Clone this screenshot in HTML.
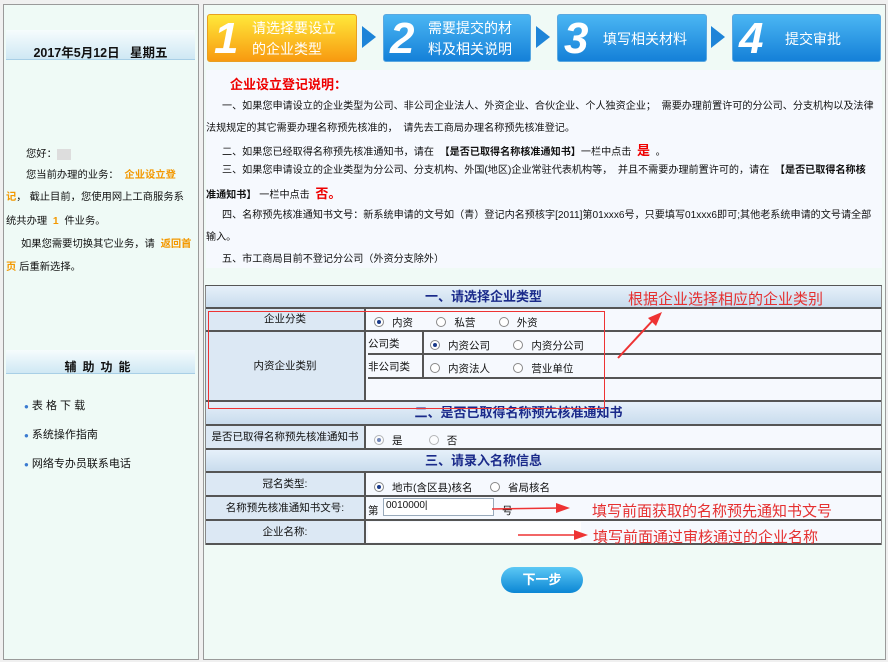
<!DOCTYPE html>
<html><head><meta charset="utf-8"><style>
*{margin:0;padding:0;box-sizing:border-box}
body{width:888px;height:662px;background:#f0f0f0;font-family:"Liberation Sans","Noto Sans CJK SC",sans-serif;font-size:11px;color:#111;position:relative;overflow:hidden}
.a{position:absolute}
.lp{left:3px;top:4px;width:196px;height:656px;background:#effaf6;border:1px solid #9a9a9a}
.rp{left:203px;top:4px;width:683px;height:656px;background:#f0faf6;border:1px solid #9a9a9a}
.bar{background:linear-gradient(#f6fcfd,#cfe8f4);border-bottom:1px solid #a8cfe6}
.step{top:14px;height:48px;border-radius:3px;background:linear-gradient(#4bb6f3,#1480d8);border:1px solid #5aa8e0;color:#fff;font-size:14px;font-weight:bold}
.step .n{position:absolute;left:6px;top:0;font-size:44px;font-style:italic;font-family:"Liberation Sans",sans-serif;font-weight:bold;line-height:48px;color:#fff}
.arr{top:26px;width:0;height:0;border-top:11px solid transparent;border-bottom:11px solid transparent;border-left:14px solid #1e84d8}
.txt{left:206px;top:70px;width:676px;height:198px;background:#f6f9fe;overflow:hidden}
.p{position:absolute;left:0;font-size:10.1px;white-space:nowrap}
.row{position:absolute;left:206px;width:675px;border-bottom:2px solid #555;background:#f6f9fe}
.hd{background:linear-gradient(#e6f0fa,#c9dced);color:#1a2a8a;font-weight:bold;font-size:13px;text-align:center}
.lb{position:absolute;left:0;top:0;width:160px;height:100%;background:#dce8f4;border-right:2px solid #555;text-align:center;font-size:10.5px}
.rd{display:inline-block;width:10px;height:10px;border-radius:50%;border:1px solid #888;background:#fff;vertical-align:-1px;margin-right:8px;position:relative}
.rd.on:after{content:"";position:absolute;left:2px;top:2px;width:4px;height:4px;border-radius:50%;background:#1a3a8a}
.red{color:#e53030;font-size:15px;font-family:"Liberation Sans","WenQuanYi Zen Hei",sans-serif}
.o{color:#f39800;font-weight:bold}
</style></head><body>
<div class="a lp"></div>
<div class="a rp"></div>
<div class="a bar" style="left:6px;top:30px;width:189px;height:30px"></div>
<div class="a" style="left:6px;top:42px;width:189px;text-align:center;font-weight:bold;font-size:12.5px">2017年5月12日&nbsp;&nbsp;&nbsp;星期五</div>
<div class="a" style="left:6px;top:143px;width:192px;font-size:10.3px;line-height:23px;white-space:nowrap">
<div style="padding-left:20px">您好：<span style="color:#fff;background:#ddd">&nbsp;&nbsp;&nbsp;&nbsp;&nbsp;</span></div>
<div style="padding-left:20px;line-height:20px">您当前办理的业务：&nbsp;&nbsp;<span class="o">企业设立登</span></div>
<div style="line-height:24px"><span class="o">记</span>，&nbsp;截止目前，您使用网上工商服务系</div>
<div>统共办理&nbsp;&nbsp;<span class="o">1</span>&nbsp;&nbsp;件业务。</div>
<div style="padding-left:15px">如果您需要切换其它业务，请&nbsp;&nbsp;<span class="o">返回首</span></div>
<div><span class="o">页</span>&nbsp;后重新选择。</div>
</div>
<div class="a bar" style="left:6px;top:350px;width:189px;height:24px"></div>
<div class="a" style="left:6px;top:358px;width:189px;text-align:center;font-weight:bold;font-size:12px;letter-spacing:6px">辅助功能</div>
<div class="a" style="left:24px;top:392px;font-size:11px;line-height:28px">
<div><span style="color:#3a7ad0;font-size:8px">●</span>&nbsp;表 格 下 载</div>
<div><span style="color:#3a7ad0;font-size:8px">●</span>&nbsp;系统操作指南</div>
<div><span style="color:#3a7ad0;font-size:8px">●</span>&nbsp;网络专办员联系电话</div>
</div>

<div class="a step" style="left:207px;width:150px;background:linear-gradient(#ffe83a,#f89a10);border-color:#e8a020"><span class="n">1</span><div class="a" style="left:44px;top:3px;line-height:21px;font-weight:normal">请选择要设立<br>的企业类型</div></div>
<div class="a arr" style="left:362px"></div>
<div class="a step" style="left:383px;width:148px"><span class="n">2</span><div class="a" style="left:44px;top:3px;line-height:21px;font-weight:normal">需要提交的材<br>料及相关说明</div></div>
<div class="a arr" style="left:536px"></div>
<div class="a step" style="left:557px;width:150px"><span class="n">3</span><div class="a" style="left:45px;top:14px;font-weight:normal">填写相关材料</div></div>
<div class="a arr" style="left:711px"></div>
<div class="a step" style="left:732px;width:149px"><span class="n">4</span><div class="a" style="left:52px;top:14px;font-weight:normal">提交审批</div></div>

<div class="a txt">
<div class="p" style="left:24px;top:4px;color:#e00;font-weight:bold;font-size:13px">企业设立登记说明：</div>
<div class="p" style="left:16px;top:27px">一、如果您申请设立的企业类型为公司、非公司企业法人、外资企业、合伙企业、个人独资企业；&nbsp; 需要办理前置许可的分公司、分支机构以及法律</div>
<div class="p" style="left:0;top:49px">法规规定的其它需要办理名称预先核准的，&nbsp; 请先去工商局办理名称预先核准登记。</div>
<div class="p" style="left:16px;top:70px">二、如果您已经取得名称预先核准通知书，请在&nbsp; <b>【是否已取得名称核准通知书】</b>一栏中点击&nbsp; <span style="color:#e00;font-size:13px;font-weight:bold">是</span>&nbsp;&nbsp;。</div>
<div class="p" style="left:16px;top:91px">三、如果您申请设立的企业类型为分公司、分支机构、外国(地区)企业常驻代表机构等，&nbsp; 并且不需要办理前置许可的，请在&nbsp; <b>【是否已取得名称核</b></div>
<div class="p" style="left:0;top:113px"><b>准通知书】</b>&nbsp;一栏中点击&nbsp; <span style="color:#e00;font-size:13px;font-weight:bold">否。</span></div>
<div class="p" style="left:16px;top:136px">四、名称预先核准通知书文号：新系统申请的文号如（青）登记内名预核字[2011]第01xxx6号，只要填写01xxx6即可;其他老系统申请的文号请全部</div>
<div class="p" style="left:0;top:158px">输入。</div>
<div class="p" style="left:16px;top:180px">五、市工商局目前不登记分公司（外资分支除外）</div>
</div>

<div class="a" style="left:205px;top:285px;width:677px;height:260px;border:1px solid #888;border-top:2px solid #555"></div>
<div class="row hd" style="top:286px;height:23px;line-height:21px"><span style="margin-left:-120px">一、请选择企业类型</span></div>
<div class="row" style="top:309px;height:23px"><div class="lb" style="line-height:21px">企业分类</div><div class="a" style="left:168px;top:6px;font-size:10.5px"><span class="rd on"></span>内资&nbsp;&nbsp;&nbsp;&nbsp;&nbsp;&nbsp;&nbsp;&nbsp;<span class="rd"></span>私营&nbsp;&nbsp;&nbsp;&nbsp;&nbsp;&nbsp;&nbsp;&nbsp;<span class="rd"></span>外资</div></div>
<div class="row" style="top:332px;height:70px;border-bottom:2px solid #555"><div class="lb" style="line-height:68px">内资企业类别</div>
<div class="a" style="left:162px;top:0;width:56px;height:23px;border-right:2px solid #555;border-bottom:2px solid #555;font-size:10.5px;padding-top:4px">公司类</div>
<div class="a" style="left:218px;top:0;right:0;height:23px;border-bottom:2px solid #555;font-size:10.5px;padding:6px 0 0 6px"><span class="rd on"></span>内资公司&nbsp;&nbsp;&nbsp;&nbsp;&nbsp;&nbsp;&nbsp;&nbsp;<span class="rd"></span>内资分公司</div>
<div class="a" style="left:162px;top:23px;width:56px;height:24px;border-right:2px solid #555;border-bottom:2px solid #555;font-size:10.5px;padding-top:4px">非公司类</div>
<div class="a" style="left:218px;top:23px;right:0;height:24px;border-bottom:2px solid #555;font-size:10.5px;padding:6px 0 0 6px"><span class="rd"></span>内资法人&nbsp;&nbsp;&nbsp;&nbsp;&nbsp;&nbsp;&nbsp;&nbsp;<span class="rd"></span>营业单位</div>
</div>
<div class="row hd" style="top:402px;height:24px;line-height:22px"><span style="margin-left:-50px">二、是否已取得名称预先核准通知书</span></div>
<div class="row" style="top:426px;height:24px"><div class="lb" style="line-height:22px">是否已取得名称预先核准通知书</div><div class="a" style="left:168px;top:7px;font-size:10.5px"><span class="rd on" style="opacity:.6"></span>是&nbsp;&nbsp;&nbsp;&nbsp;&nbsp;&nbsp;&nbsp;&nbsp;&nbsp;<span class="rd" style="opacity:.6"></span>否</div></div>
<div class="row hd" style="top:450px;height:23px;line-height:21px"><span style="margin-left:-120px">三、请录入名称信息</span></div>
<div class="row" style="top:473px;height:24px"><div class="lb" style="line-height:22px">冠名类型:</div><div class="a" style="left:168px;top:7px;font-size:10.5px"><span class="rd on"></span>地市(含区县)核名&nbsp;&nbsp;&nbsp;&nbsp;&nbsp;&nbsp;<span class="rd"></span>省局核名</div></div>
<div class="row" style="top:497px;height:24px"><div class="lb" style="line-height:22px">名称预先核准通知书文号:</div><div class="a" style="left:162px;top:6px;font-size:10.5px">第</div><div class="a" style="left:177px;top:1px;width:111px;height:18px;border:1px solid #9ab;background:#fff;font-size:10px;padding:1px 2px">0010000|</div><div class="a" style="left:296px;top:6px;font-size:10.5px">号</div></div>
<div class="row" style="top:521px;height:24px"><div class="lb" style="line-height:22px">企业名称:</div><div class="a" style="left:162px;top:1px;width:213px;height:20px;background:#fff"></div></div>

<div class="a" style="left:208px;top:311px;width:397px;height:98px;border:1px solid #e33"></div>
<div class="a red" style="left:628px;top:288px">根据企业选择相应的企业类别</div>
<svg class="a" style="left:600px;top:300px" width="80" height="70"><line x1="18" y1="58" x2="55" y2="18" stroke="#e33" stroke-width="2"/><polygon points="62,12 48,18 56,26" fill="#e33"/></svg>
<div class="a red" style="left:592px;top:500px">填写前面获取的名称预先通知书文号</div>
<div class="a red" style="left:593px;top:526px">填写前面通过审核通过的企业名称</div>
<svg class="a" style="left:480px;top:500px" width="110" height="50"><line x1="12" y1="9" x2="80" y2="8" stroke="#e33" stroke-width="1.5"/><polygon points="90,8 76,3 76,13" fill="#e33"/><line x1="38" y1="35" x2="100" y2="35" stroke="#e33" stroke-width="1.5"/><polygon points="108,35 94,30 94,40" fill="#e33"/></svg>

<div class="a" style="left:501px;top:567px;width:82px;height:26px;border-radius:13px;background:linear-gradient(#5cc8f5,#0b86d4);color:#fff;font-size:13px;text-align:center;line-height:26px;font-weight:bold">下一步</div>
</body></html>
